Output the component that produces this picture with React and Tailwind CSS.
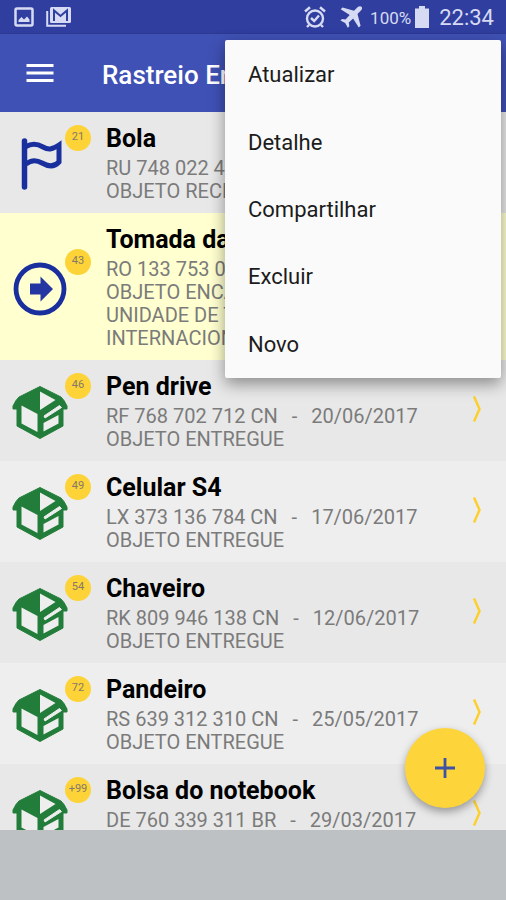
import { useState } from 'react'

const MENU_ITEMS = ['Atualizar', 'Detalhe', 'Compartilhar', 'Excluir', 'Novo'];

const PACKAGES = [
  { name: 'Bola', code: 'RU 748 022 471 CN', date: '26/06/2017', days: '21', status: ['OBJETO RECEBIDO'], icon: 'flag' },
  {
    name: 'Tomada da sala',
    code: 'RO 133 753 012 CN',
    date: '22/06/2017',
    days: '43',
    status: ['OBJETO ENCAMINHADO', 'UNIDADE DE TRATAMENTO', 'INTERNACIONAL'],
    icon: 'transit',
    highlight: true,
  },
  { name: 'Pen drive', code: 'RF 768 702 712 CN', date: '20/06/2017', days: '46', status: ['OBJETO ENTREGUE'], icon: 'box' },
  { name: 'Celular S4', code: 'LX 373 136 784 CN', date: '17/06/2017', days: '49', status: ['OBJETO ENTREGUE'], icon: 'box' },
  { name: 'Chaveiro', code: 'RK 809 946 138 CN', date: '12/06/2017', days: '54', status: ['OBJETO ENTREGUE'], icon: 'box' },
  { name: 'Pandeiro', code: 'RS 639 312 310 CN', date: '25/05/2017', days: '72', status: ['OBJETO ENTREGUE'], icon: 'box' },
  { name: 'Bolsa do notebook', code: 'DE 760 339 311 BR', date: '29/03/2017', days: '+99', status: ['OBJETO ENTREGUE'], icon: 'box' },
];

function FlagIcon() {
  return (
    <svg viewBox="0 0 56 56" className="size-14" fill="none" stroke="#1a2f9e" aria-hidden="true">
      <path d="M12.500 4v46" strokeWidth="5.500" strokeLinecap="round" />
      <path d="M14 9.500C20 6 25 6.500 31 10S41 12 47 8V25C42 30.500 36 29.500 30 26S19 23 14 27" strokeWidth="5" />
    </svg>
  );
}

function TransitIcon() {
  return (
    <svg viewBox="0 0 56 56" className="size-14" aria-hidden="true">
      <circle cx="28" cy="28" r="24" fill="none" stroke="#1a2f9e" strokeWidth="4.800" />
      <path d="M18 22.500h10.500V15.500L41 28 28.500 40.500V33.500H18z" fill="#2336a2" />
    </svg>
  );
}

function BoxIcon() {
  return (
    <svg viewBox="0 0 56 56" className="size-14" aria-hidden="true">
      <path d="M28 1.500L49 12L52 15.500L55 21V24H51V41L28 53.500L5 41V24H1V21L4 15.500L7 12z" fill="#237d3a" stroke="#237d3a" strokeWidth="1" strokeLinejoin="round" />
      <path d="M28 6.500L43.500 15L28 25z" fill="#eee" />
      <path d="M9.500 20.500L25.500 29V47L9.500 38.500z" fill="#eee" />
      <path d="M32 31L47.500 20.500L49.500 22.500L33 33z" fill="#eee" stroke="#eee" strokeWidth="1" />
      <path d="M31.500 38L46.500 30V38.500L31.500 46.500z" fill="#eee" />
    </svg>
  );
}

const ICONS = { flag: FlagIcon, transit: TransitIcon, box: BoxIcon };

function StatusBar() {
  return (
    <div className="h-[34px] shrink-0 bg-[#303f9f] text-[#d6daf2] flex items-center justify-between pl-3.5 pr-3">
      <div className="flex items-center gap-3">
        <svg viewBox="0 0 20 20" className="size-5" fill="none" stroke="currentColor" aria-hidden="true">
          <rect x="1.500" y="1.500" width="17" height="17" rx="1.500" strokeWidth="2.500" />
          <path d="M4.500 15v-2l3-3 2.500 2.500L13 9.500l2.500 3V15z" fill="currentColor" stroke="none" />
        </svg>
        <svg viewBox="0 0 25 20" className="w-[25px] h-5" fill="none" aria-hidden="true">
          <path d="M1.200 4v14.800H20" stroke="currentColor" strokeWidth="2" />
          <rect x="4" y="0" width="21" height="16" rx="1.500" fill="currentColor" />
          <path d="M8 14V3.500l6.500 5.500L21 3.500V14" stroke="#303f9f" strokeWidth="2" />
        </svg>
      </div>
      <div className="flex items-center">
        <svg viewBox="0 0 22 22" className="size-[22px]" fill="none" stroke="currentColor" strokeWidth="2.400" aria-hidden="true">
          <circle cx="11" cy="12.500" r="8" />
          <path d="M1 5.500L6 1.200M21 5.500L16 1.200" strokeWidth="2.500" />
          <path d="M7 12l3.200 3 4.800-5.500M5 19l-2 2M17 19l2 2" />
        </svg>
        <svg viewBox="0 0 22 22" className="size-[22px] ml-3.5" fill="currentColor" aria-hidden="true">
          <path d="M21.500.7c-1-1-2.800-.6-4 .6L14 4.800 2.500 1.500.7 3.300l9 5.700-4.200 4.500-3.500-.5L.5 14.500l4.700 2.500L7.800 21.700l1.500-1.500-.5-3.700 4.300-4.100 5.700 9.100 1.800-1.800L17.500 8l3.400-3.500c1.200-1.200 1.600-2.800.6-3.800z" />
        </svg>
        <span className="ml-2 mt-0.5 text-[17px] leading-none">100%</span>
        <svg viewBox="0 0 14 22" className="w-3.5 h-[22px] ml-1" fill="currentColor" aria-hidden="true">
          <path d="M4 0h6v2.500h4V22H0V2.500h4z" />
        </svg>
        <span className="ml-2.5 mt-0.5 text-[22px] leading-none">22:34</span>
      </div>
    </div>
  );
}

function PackageRow({ item }) {
  const Icon = ICONS[item.icon];

  return (
    <li className={`flex items-center py-2.5 pl-3 pr-6 ${item.highlight ? "bg-[#ffffcf]" : "odd:bg-[#e8e8e8] even:bg-[#eeeeee]"}`}>
      <div className="relative w-[94px] shrink-0 pt-1">
        <Icon />
        <span className="absolute left-[53px] -top-2 size-[26px] rounded-full bg-[#fdd337] text-[#85786a] text-[11px] flex items-center justify-center">
          {item.days}
        </span>
      </div>
      <div className="flex-1 min-w-0 whitespace-nowrap">
        <h2 className="text-[25px] leading-[34px] mb-px font-bold text-black">{item.name}</h2>
        <p className="text-xl leading-[23px] text-[#7b7b7b] flex gap-3.5">
          <span>{item.code}</span>
          <span>-</span>
          <span>{item.date}</span>
        </p>
        {item.status.map((line) => (
          <p key={line} className="text-xl leading-[23px] text-[#7b7b7b]">{line}</p>
        ))}
      </div>
      <svg viewBox="0 0 10 28" className="w-2.5 h-7 mb-1 shrink-0" fill="none" stroke="#fdcf2e" strokeWidth="2.500" aria-hidden="true">
        <path d="M2 1.500L7.500 14L2 26.500" />
      </svg>
    </li>
  );
}

function App() {
  const [menuOpen, setMenuOpen] = useState(true);

  return (
    <div className="relative h-screen flex flex-col overflow-hidden font-[Roboto,sans-serif]">
      <StatusBar />
      <header className="relative h-[78px] shrink-0 bg-[#3f51b5] flex items-center px-[26px] shadow-[0_1px_3px_rgba(0,0,0,0.4)]">
        <button aria-label="Abrir menu" className="text-white" onClick={() => setMenuOpen(!menuOpen)}>
          <svg viewBox="0 0 28 20" className="w-7 h-5" stroke="currentColor" strokeWidth="3" aria-hidden="true">
            <path d="M.5 2.500h27M.5 10h27M.5 17.500h27" />
          </svg>
        </button>
        <h1 className="ml-12 mt-1 text-[26px] leading-8 font-medium text-white whitespace-nowrap">Rastreio Encomendas</h1>
      </header>

      <main className="relative flex-1 min-h-0 bg-[#eeeeee]">
        <ul className="h-full overflow-hidden">
          {PACKAGES.map((item) => (
            <PackageRow key={item.code} item={item} />
          ))}
        </ul>
        <button aria-label="Adicionar" className="absolute right-[21px] bottom-[22px] size-20 rounded-full bg-[#fdd53b] flex items-center justify-center shadow-[0_4px_8px_rgba(0,0,0,0.35)]">
          <svg viewBox="0 0 20 20" className="size-5" stroke="#3f51a5" strokeWidth="2.800" aria-hidden="true">
            <path d="M10 0v20M0 10h20" />
          </svg>
        </button>
      </main>

      <footer className="h-[70px] shrink-0 bg-[#bdc1c4]" />

      {menuOpen && (
        <div role="menu" className="absolute top-10 right-[5px] w-[276px] h-[338px] pt-px rounded-xs bg-[#fafafa] flex flex-col shadow-[0_6px_16px_rgba(0,0,0,0.4)]">
          {MENU_ITEMS.map((label) => (
            <button key={label} role="menuitem" className="flex-1 px-[23px] text-left text-[22px] text-[#1c1c1c]" onClick={() => setMenuOpen(false)}>
              {label}
            </button>
          ))}
        </div>
      )}
    </div>
  );
}

export default App;
